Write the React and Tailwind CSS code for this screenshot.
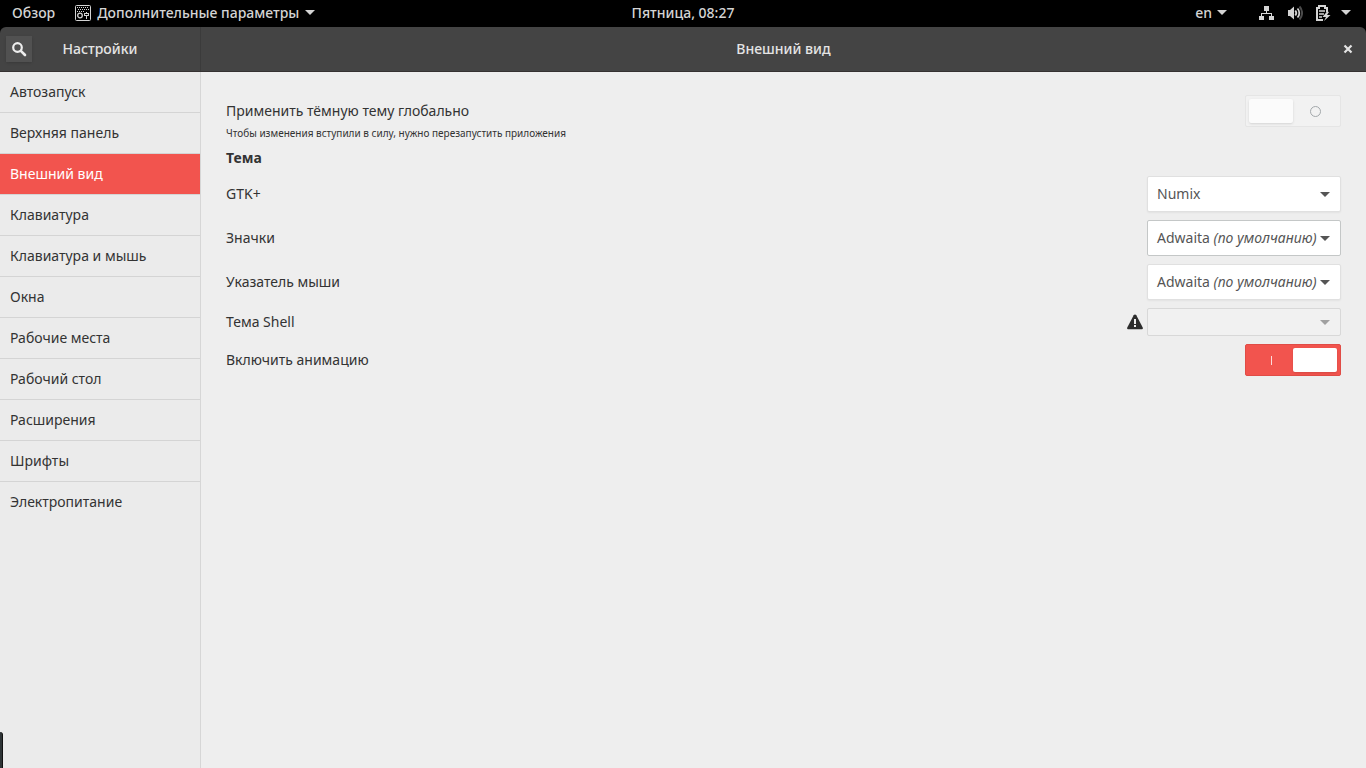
import { useState } from "react";

const sections = [
  "Автозапуск",
  "Верхняя панель",
  "Внешний вид",
  "Клавиатура",
  "Клавиатура и мышь",
  "Окна",
  "Рабочие места",
  "Рабочий стол",
  "Расширения",
  "Шрифты",
  "Электропитание",
];

// Small downward triangle used by the panel menus and the drop-downs
const Caret = () => (
  <svg
    viewBox="0 0 10 5"
    className="h-[5px] w-[10px] shrink-0 fill-current"
    aria-hidden="true"
  >
    <path d="M0 0h10L5 5z" />
  </svg>
);

const TweaksIcon = () => (
  <svg viewBox="0 0 16 16" className="size-4 shrink-0" fill="none" aria-hidden="true">
    <rect x="0.5" y="0.5" width="15" height="15" rx="1" stroke="currentColor" />
    <path
      d="M2 2.5h12M3 4.5h11M2 6.5h8"
      stroke="currentColor"
      strokeDasharray="1 1"
    />
    <circle cx="5" cy="10.5" r="2.3" stroke="currentColor" strokeWidth="1.3" />
    <path d="M11.5 7v7" stroke="currentColor" />
    <rect x="9.5" y="8.5" width="4" height="2" fill="#000" stroke="currentColor" />
  </svg>
);

const NetworkIcon = () => (
  <svg viewBox="0 0 16 16" className="size-4" fill="currentColor" aria-hidden="true">
    <path d="M5 1h5v5H8v2h5v3h2v4h-5v-4h2V9H3v2h2v4H0v-4h2V8h5V6H5z" />
  </svg>
);

const VolumeIcon = () => (
  <svg viewBox="0 0 16 16" className="size-4" fill="none" aria-hidden="true">
    <path d="M1 5h2l4-3.500v13L3 11H1z" fill="currentColor" />
    <path d="M8.300 5.500a4 4 0 0 1 0 5" stroke="currentColor" strokeWidth="1.8" />
    <path d="M10.500 3.500a6.500 6.500 0 0 1 0 9" stroke="currentColor" strokeWidth="1.8" />
    <path
      d="M12.500 1.500a9.500 9.500 0 0 1 0 13"
      stroke="currentColor"
      strokeWidth="2"
      opacity="0.35"
    />
  </svg>
);

const BatteryIcon = () => (
  <svg viewBox="0 0 16 16" className="size-4" fill="none" aria-hidden="true">
    <path d="M8 15H2V3h2V1h6v2h2v4" stroke="currentColor" strokeWidth="2" />
    <path d="M4 6h6M4 9h5M4 12h3" stroke="currentColor" strokeWidth="1.600" />
    <path d="M12 6.500L7.500 12h3.500l-2 4 6.500-6h-3.500L14 7z" fill="currentColor" />
  </svg>
);

const WarningIcon = () => (
  <svg viewBox="0 0 16 16" className="size-4 shrink-0" role="img" aria-label="Внимание">
    <path
      d="M8 0.500c0.600 0 1 0.300 1.300 0.800l6.300 12c0.600 1.200 0.200 2-1.100 2H1.500c-1.300 0-1.700-0.800-1.100-2l6.300-12C7 0.800 7.400 0.500 8 0.500z"
      fill="#2d2d2d"
    />
    <path d="M7 5h2v5H7zM7 11h2v2H7z" fill="#eee" />
  </svg>
);

const TopBar = () => (
  <div className="grid h-[27px] grid-cols-[1fr_auto_1fr] items-center bg-black px-3 pb-[2px] font-medium text-[#d4d4d4]">
    <div className="flex items-center gap-5">
      <button type="button">Обзор</button>
      <button type="button" className="flex items-center gap-[6px]">
        <TweaksIcon />
        Дополнительные параметры
        <Caret />
      </button>
    </div>
    <button type="button">Пятница, 08:27</button>
    <div className="flex items-center justify-end gap-8 pr-[3px]">
      <button type="button" className="flex items-center gap-[5px]">
        en
        <Caret />
      </button>
      <button type="button" aria-label="Система" className="flex items-center gap-[10px]">
        <span className="flex items-center gap-3">
          <NetworkIcon />
          <VolumeIcon />
          <BatteryIcon />
        </span>
        <Caret />
      </button>
    </div>
  </div>
);

const HeaderBar = ({ title }) => (
  <header className="bg-black font-medium text-[#e4e4e4]">
    <div className="flex h-[45px] overflow-hidden rounded-t-md border-b border-[#353131] bg-[#444]">
      <div className="grid w-[201px] shrink-0 grid-cols-[1fr_auto_1fr] items-center border-r border-[#3b3b3b] px-[6px]">
        <button
          type="button"
          aria-label="Поиск"
          className="flex size-[26px] items-center justify-center bg-[#515151] shadow-sm"
        >
          <svg viewBox="0 0 16 16" className="size-4" fill="none" stroke="#eee" aria-hidden="true">
            <circle cx="6.5" cy="6.500" r="4.300" strokeWidth="2.200" />
            <path d="M9.800 9.800l4.200 4.200" strokeWidth="2.600" strokeLinecap="round" />
          </svg>
        </button>
        <h1>Настройки</h1>
      </div>
      <div className="grid grow grid-cols-[1fr_auto_1fr] items-center px-[13px]">
        <span />
        <h2>{title}</h2>
        <button type="button" aria-label="Закрыть" className="justify-self-end">
          <svg viewBox="0 0 10 10" className="size-[10px]" stroke="#e4e4e4" aria-hidden="true">
            <path d="M1.500 1.500l7 7M8.500 1.500l-7 7" strokeWidth="2.200" />
          </svg>
        </button>
      </div>
    </div>
  </header>
);

const Row = ({ id, label, children }) => (
  <div className="flex items-center justify-between">
    <label htmlFor={id}>{label}</label>
    <div className="flex items-center gap-1">{children}</div>
  </div>
);

// The native select stays on top for interaction, the visible value is drawn
// under it so that the "(по умолчанию)" part can be italic
const ThemeSelect = ({ id, name, isDefault, active }) => (
  <div
    className={`relative flex h-9 w-[194px] items-center justify-between rounded-xs border bg-white pr-[10px] pl-[9px] text-[#555] ${
      active ? "border-[#c4c7c7]" : "border-[#e0e0e0] shadow-xs"
    }`}
  >
    <span aria-hidden="true" className="whitespace-nowrap">
      {name} {isDefault && <i>(по умолчанию)</i>}
    </span>
    <Caret />
    <select id={id} className="absolute inset-0 w-full cursor-pointer opacity-0">
      <option>{isDefault ? `${name} (по умолчанию)` : name}</option>
    </select>
  </div>
);

const Switch = ({ id, checked, onChange }) => (
  <span
    className={`relative grid h-8 w-24 grid-cols-2 items-center rounded-xs border p-[3px] ${
      checked ? "border-[#e04c46] bg-[#f2544e]" : "border-[#e5e5e5] bg-[#f2f2f2]"
    }`}
  >
    {checked ? (
      <span className="h-[9px] w-px justify-self-center bg-[#fcdcdb]" />
    ) : (
      <span className="h-6 rounded-xs bg-[#fbfbfb] shadow-sm" />
    )}
    {checked ? (
      <span className="h-6 rounded-xs bg-white shadow-sm" />
    ) : (
      <span className="size-[11px] justify-self-center rounded-full border border-[#a3a8ab]" />
    )}
    <input
      id={id}
      type="checkbox"
      role="switch"
      checked={checked}
      onChange={(e) => onChange(e.target.checked)}
      className="absolute inset-0 size-full cursor-pointer opacity-0"
    />
  </span>
);

export default function App() {
  const [section, setSection] = useState("Внешний вид");
  const [dark, setDark] = useState(false);
  const [animations, setAnimations] = useState(true);

  return (
    <div className="flex min-h-screen flex-col bg-[#eee] font-['Noto_Sans',sans-serif] text-[14px] leading-5 text-[#333]">
      <TopBar />
      <HeaderBar title={section} />

      <div className="flex grow">
        <nav className="w-[201px] shrink-0 border-r border-[#d6d6d6] bg-[#ebebeb]">
          <ul>
            {sections.map((name, i) => (
              <li
                key={name}
                className={i < sections.length - 1 ? "border-b border-[#d4d4d4]" : ""}
              >
                <button
                  type="button"
                  onClick={() => setSection(name)}
                  className={`block h-10 w-full px-[10px] text-left ${
                    name === section ? "bg-[#f2544e] text-white" : ""
                  }`}
                >
                  {name}
                </button>
              </li>
            ))}
          </ul>
        </nav>

        <main className="flex grow flex-col gap-2 px-[25px] pt-[23px]">
          <div>
            <Row id="dark" label="Применить тёмную тему глобально">
              <Switch id="dark" checked={dark} onChange={setDark} />
            </Row>
            <p className="text-[10px] leading-[13px]">
              Чтобы изменения вступили в силу, нужно перезапустить приложения
            </p>
          </div>

          <h3 className="font-bold">Тема</h3>

          <Row id="gtk" label="GTK+">
            <ThemeSelect id="gtk" name="Numix" />
          </Row>
          <Row id="icons" label="Значки">
            <ThemeSelect id="icons" name="Adwaita" isDefault active />
          </Row>
          <Row id="cursor" label="Указатель мыши">
            <ThemeSelect id="cursor" name="Adwaita" isDefault />
          </Row>
          <Row id="shell" label="Тема Shell">
            <WarningIcon />
            <div className="relative flex h-7 w-[194px] items-center justify-end rounded-xs border border-[#d8d8d8] bg-[#f1f1f1] pr-[10px] text-[#a0a0a0]">
              <Caret />
              <select id="shell" disabled className="absolute inset-0 w-full opacity-0" />
            </div>
          </Row>
          <Row id="animations" label="Включить анимацию">
            <Switch id="animations" checked={animations} onChange={setAnimations} />
          </Row>
        </main>
      </div>

      {/* Edge of the collapsed message tray */}
      <div className="fixed bottom-0 left-0 h-9 w-[3px] rounded-tr-sm border-r border-[#111] bg-[#2e3436]" />
    </div>
  );
}
